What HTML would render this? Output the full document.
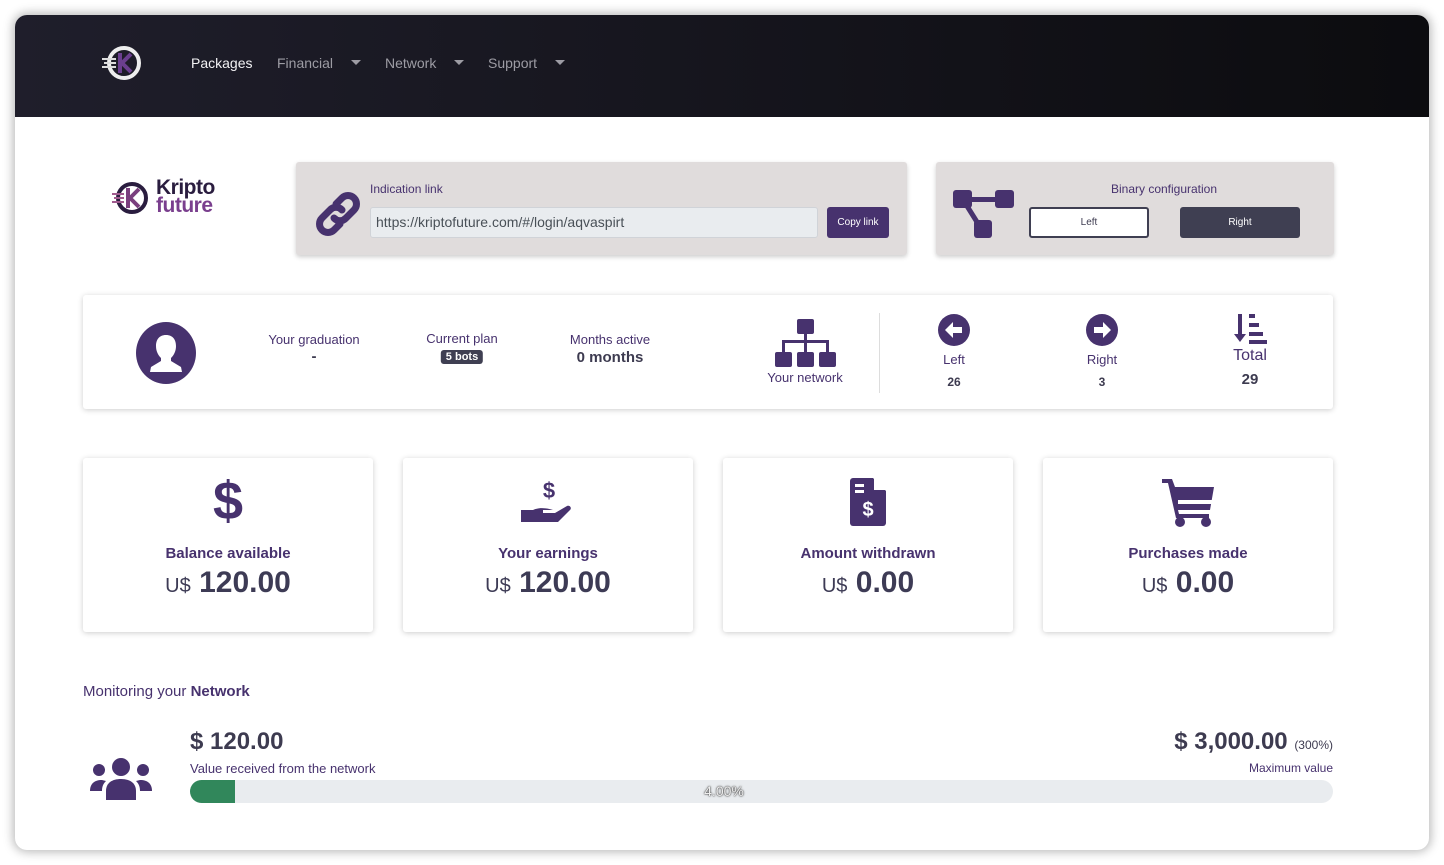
<!DOCTYPE html>
<html><head><meta charset="utf-8"><style>
*{box-sizing:border-box;margin:0;padding:0}
body{width:1444px;height:865px;background:#fff;font-family:"Liberation Sans",sans-serif;position:relative;overflow:hidden;color:#3d3b50}
.win{position:absolute;left:15px;top:15px;width:1414px;height:835px;border-radius:12px;background:#fff;box-shadow:0 0 10px 2px rgba(0,0,0,.28);overflow:hidden}
.nav{position:absolute;left:0;top:0;width:1414px;height:102px;background:linear-gradient(90deg,#1f1e2b,#0c0c0f)}
.nav span{position:absolute;top:40px;font-size:14px;color:#9d9ca4}
.car{display:inline-block;width:0;height:0;border-left:5px solid transparent;border-right:5px solid transparent;border-top:5px solid #9d9ca4;position:absolute;top:45px}
.a{position:absolute}
.p{color:#47326e}
.card{position:absolute;background:#fff;box-shadow:0 1px 6px rgba(0,0,0,.2);border-radius:3px}
.gray{position:absolute;background:#e0dcdc;box-shadow:0 2px 5px rgba(0,0,0,.2);border-radius:3px}
.c{position:absolute;text-align:center;transform:translateX(-50%);white-space:nowrap}
.bc .t{font-weight:bold;font-size:15px;color:#47326e}
.bc .v{font-size:30px;font-weight:bold;color:#3d3b55}
.bc .v small{font-size:20px;font-weight:normal}
</style></head><body>
<div class="win">
<div class="nav">
<svg class="a" style="left:85px;top:28px" width="46" height="40" viewBox="0 0 46 40"><circle cx="24" cy="20" r="15" fill="none" stroke="#eee" stroke-width="4"/><path d="M20 10v20M22 20l9-9M22 20l9 9" stroke="#6b3f8f" stroke-width="4"/><path d="M2 16h14M4 20h12M2 24h14" stroke="#ddd" stroke-width="2"/></svg>
<span style="left:176px;color:#f2f2f4">Packages</span>
<span style="left:262px">Financial</span><i class="car" style="left:336px"></i>
<span style="left:370px">Network</span><i class="car" style="left:439px"></i>
<span style="left:473px">Support</span><i class="car" style="left:540px"></i>
</div>
</div>
<svg class="a" style="left:110px;top:180px" width="40" height="36" viewBox="0 0 40 36"><circle cx="22" cy="18" r="14" fill="none" stroke="#2a1d3f" stroke-width="4"/><path d="M18 8v20M20 18l9-9M20 18l9 9" stroke="#7a3f7e" stroke-width="4"/><path d="M2 14h12M4 18h10M2 22h12" stroke="#a05a8e" stroke-width="2"/></svg>
<div class="a" style="left:156px;top:179px;font-weight:bold;font-size:21px;line-height:18px;letter-spacing:-0.5px;color:#2a1d3f">Kripto<br><span style="color:#7a3f8e">future</span></div>
<div class="gray" style="left:296px;top:162px;width:611px;height:93px">
<svg class="a" style="left:18px;top:28px" width="48" height="48" viewBox="0 0 48 48"><g fill="none" stroke="#47326e" stroke-width="7" stroke-linecap="round"><path d="M22 14l6-6a8 8 0 0 1 12 12l-8 8a8 8 0 0 1-12 0"/><path d="M26 34l-6 6a8 8 0 0 1-12-12l8-8a8 8 0 0 1 12 0"/></g></svg>
<div class="a p" style="left:74px;top:20px;font-size:12px">Indication link</div>
<div class="a" style="left:74px;top:45px;width:448px;height:31px;background:#e9ecef;border:1px solid #d0d3d8;border-radius:3px;font-size:14px;padding:6px 5px;color:#495057">https://kriptofuture.com/#/login/aqvaspirt</div>
<div class="a" style="left:531px;top:45px;width:62px;height:31px;background:#47326e;border-radius:3px;color:#fff;font-size:10px;text-align:center;line-height:31px">Copy link</div>
</div>
<div class="gray" style="left:936px;top:162px;width:398px;height:93px">
<svg class="a" style="left:17px;top:27px" width="62" height="50" viewBox="0 0 62 50"><rect x="0" y="1" width="19" height="18" rx="3" fill="#47326e"/><rect x="42" y="1" width="19" height="18" rx="3" fill="#47326e"/><rect x="21" y="31" width="18" height="18" rx="3" fill="#47326e"/><path d="M15 8h28v5H15z" fill="#47326e"/><path d="M14 17l10 16" stroke="#47326e" stroke-width="5"/></svg>
<div class="c p" style="left:228px;top:20px;font-size:12px">Binary configuration</div>
<div class="a" style="left:93px;top:45px;width:120px;height:31px;background:#fff;border:2px solid #3f3f52;border-radius:3px;font-size:10px;text-align:center;line-height:27px">Left</div>
<div class="a" style="left:244px;top:45px;width:120px;height:31px;background:#3f3f52;border-radius:3px;font-size:10px;color:#fff;text-align:center;line-height:31px">Right</div>
</div>
<div class="card" style="left:83px;top:295px;width:1250px;height:114px"></div>
<svg class="a" style="left:136px;top:322px" width="60" height="62" viewBox="0 0 60 62"><ellipse cx="30" cy="31" rx="30" ry="31" fill="#47326e"/><path d="M30 13c-7 0-10 5-10 11 0 5 2 9 5 12v3l-10 6-1 5h32l-1-5-10-6v-3c3-3 5-7 5-12 0-6-3-11-10-11z" fill="#fff"/></svg>
<div class="c p" style="left:314px;top:332px;font-size:13px">Your graduation</div>
<div class="c" style="left:314px;top:348px;font-size:15px;font-weight:bold">-</div>
<div class="c p" style="left:462px;top:331px;font-size:13px">Current plan</div>
<div class="c" style="left:462px;top:350px;font-size:11px;font-weight:bold;color:#fff;background:#3f3f52;border-radius:3px;padding:1px 5px">5 bots</div>
<div class="c p" style="left:610px;top:332px;font-size:13px">Months active</div>
<div class="c" style="left:610px;top:349px;font-size:15px;font-weight:bold">0 months</div>
<svg class="a" style="left:775px;top:319px" width="61" height="48" viewBox="0 0 61 48"><g fill="#47326e"><rect x="22" y="0" width="17" height="15" rx="2"/><rect x="0" y="33" width="17" height="15" rx="2"/><rect x="22" y="33" width="17" height="15" rx="2"/><rect x="44" y="33" width="17" height="15" rx="2"/><rect x="29" y="14" width="3" height="19"/><rect x="7" y="21" width="47" height="3"/><rect x="7" y="21" width="3" height="12"/><rect x="51" y="21" width="3" height="12"/></g></svg>
<div class="c p" style="left:805px;top:370px;font-size:13px">Your network</div>
<div class="a" style="left:879px;top:313px;width:1px;height:80px;background:#ddd"></div>
<svg class="a" style="left:938px;top:314px" width="32" height="32" viewBox="0 0 32 32"><circle cx="16" cy="16" r="16" fill="#47326e"/><path d="M7 16l8-8v5h9v6h-9v5z" fill="#fff"/></svg>
<div class="c p" style="left:954px;top:352px;font-size:13px">Left</div>
<div class="c" style="left:954px;top:375px;font-size:12px;font-weight:bold">26</div>
<svg class="a" style="left:1086px;top:314px" width="32" height="32" viewBox="0 0 32 32"><circle cx="16" cy="16" r="16" fill="#47326e"/><path d="M25 16l-8-8v5H8v6h9v5z" fill="#fff"/></svg>
<div class="c p" style="left:1102px;top:352px;font-size:13px">Right</div>
<div class="c" style="left:1102px;top:375px;font-size:12px;font-weight:bold">3</div>
<svg class="a" style="left:1234px;top:314px" width="33" height="30" viewBox="0 0 33 30"><g fill="#47326e"><rect x="4" y="0" width="4" height="22"/><path d="M0 20h12l-6 8z"/><rect x="15" y="0" width="6" height="4"/><rect x="15" y="9" width="10" height="4"/><rect x="15" y="18" width="14" height="4"/><rect x="15" y="26" width="18" height="4"/></g></svg>
<div class="c p" style="left:1250px;top:347px;font-size:16px">Total</div>
<div class="c" style="left:1250px;top:371px;font-size:15px;font-weight:bold">29</div>
<div class="card" style="left:83px;top:458px;width:290px;height:174px"></div>
<div class="card" style="left:403px;top:458px;width:290px;height:174px"></div>
<div class="card" style="left:723px;top:458px;width:290px;height:174px"></div>
<div class="card" style="left:1043px;top:458px;width:290px;height:174px"></div>
<div class="bc">
<div class="c p" style="left:228px;top:470px;font-size:54px;font-weight:bold;line-height:62px">$</div>
<div class="c t" style="left:228px;top:545px">Balance available</div>
<div class="c v" style="left:228px;top:566px"><small>U$</small> 120.00</div>
<svg class="a" style="left:520px;top:478px" width="56" height="48" viewBox="0 0 56 48"><text x="29" y="20" text-anchor="middle" font-family="Liberation Sans" font-weight="bold" font-size="22" fill="#47326e">$</text><path d="M1 32h12c6-3 14-2 20 0l-10 0v3h12l12-7c3-1 5 2 3 4l-12 12H1z" fill="#47326e"/></svg>
<div class="c t" style="left:548px;top:545px">Your earnings</div>
<div class="c v" style="left:548px;top:566px"><small>U$</small> 120.00</div>
<svg class="a" style="left:850px;top:478px" width="36" height="48" viewBox="0 0 36 48"><path d="M3 0h20l13 13v32a3 3 0 0 1-3 3H3a3 3 0 0 1-3-3V3a3 3 0 0 1 3-3z" fill="#47326e"/><path d="M24 0l12 12H24z" fill="#fff"/><rect x="5" y="6" width="9" height="3" fill="#fff"/><rect x="5" y="12" width="9" height="3" fill="#fff"/><text x="18" y="38" text-anchor="middle" font-family="Liberation Sans" font-weight="bold" font-size="20" fill="#fff">$</text></svg>
<div class="c t" style="left:868px;top:545px">Amount withdrawn</div>
<div class="c v" style="left:868px;top:566px"><small>U$</small> 0.00</div>
<svg class="a" style="left:1160px;top:477px" width="56" height="50" viewBox="0 0 56 50"><path d="M2 2h10l3 8h39l-4 23H18l1 4h30v4H16L8 6H2z" fill="#47326e"/><circle cx="20" cy="45" r="5" fill="#47326e"/><circle cx="46" cy="45" r="5" fill="#47326e"/><rect x="18" y="23" width="34" height="4" fill="#fff"/></svg>
<div class="c t" style="left:1188px;top:545px">Purchases made</div>
<div class="c v" style="left:1188px;top:566px"><small>U$</small> 0.00</div>
</div>
<div class="a p" style="left:83px;top:683px;font-size:15px">Monitoring your <b>Network</b></div>
<svg class="a" style="left:90px;top:758px" width="62" height="42" viewBox="0 0 62 42"><g fill="#47326e"><circle cx="31" cy="9" r="9"/><circle cx="9" cy="12" r="6"/><circle cx="53" cy="12" r="6"/><path d="M16 42v-9c0-8 6-12 15-12s15 4 15 12v9z"/><path d="M0 33c0-7 4-11 12-11l4 1c-3 3-4 6-4 10z"/><path d="M62 33c0-7-4-11-12-11l-4 1c3 3 4 6 4 10z"/></g></svg>
<div class="a" style="left:190px;top:728px;font-size:24px;font-weight:bold">$ 120.00</div>
<div class="a p" style="left:190px;top:761px;font-size:13px">Value received from the network</div>
<div class="a" style="right:111px;top:728px;font-size:24px;font-weight:bold;white-space:nowrap">$ 3,000.00 <span style="font-size:12px;font-weight:normal">(300%)</span></div>
<div class="a p" style="right:111px;top:761px;font-size:12px">Maximum value</div>
<div class="a" style="left:190px;top:780px;width:1143px;height:23px;background:#e9ecef;border-radius:12px;overflow:hidden"><div style="width:45px;height:23px;background:#31875b"></div><div style="position:absolute;left:504px;top:0;width:60px;text-align:center;font-size:14px;line-height:23px;color:#eeeeee;text-shadow:0 0 2px #333,0 0 1px #333">4.00%</div></div>
</body></html>
